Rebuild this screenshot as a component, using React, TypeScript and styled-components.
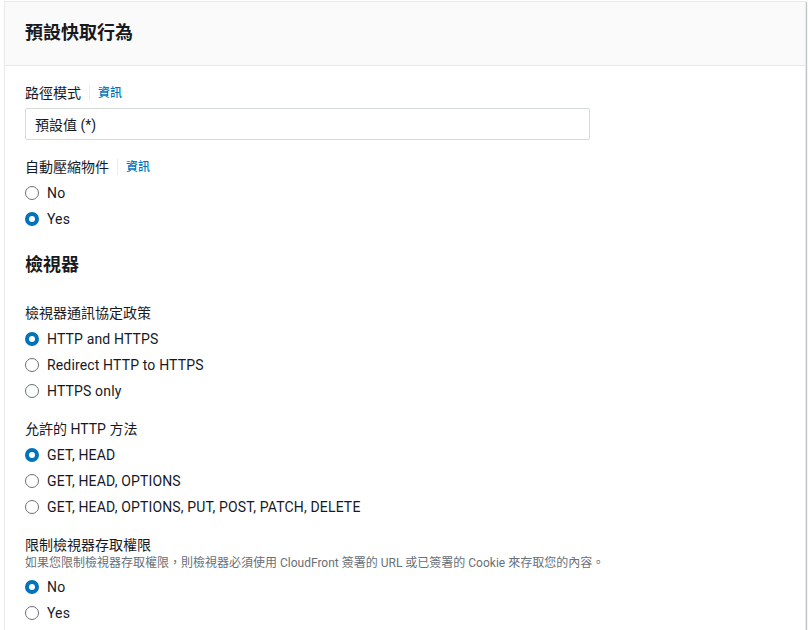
import styled, { createGlobalStyle } from "styled-components";

const GlobalStyle = createGlobalStyle`
  html, body {
    margin: 0;
    padding: 0;
    background: #ffffff;
    font-family: Roboto, "Noto Sans CJK TC", sans-serif;
    color: #16191f;
  }
  * { box-sizing: border-box; }
`;

type Option = { label: string; checked?: boolean };

const Page = styled.div`
  padding: 1px 2px 0 4px;
  height: 630px;
  overflow: hidden;
`;

const Card = styled.section`
  background: #ffffff;
  border: 1px solid #e6eaea;
  border-bottom: none;
  box-shadow: 1px 1px 1px 0 rgba(0, 28, 36, 0.25);
  min-height: 700px;
`;

const CardHeader = styled.header`
  background: #fafafa;
  border-bottom: 1px solid #e6eaea;
  padding: 19px 20px 20px;
`;

const Title = styled.h2`
  margin: 0;
  font-size: 18px;
  line-height: 24px;
  font-weight: 700;
  color: #16191f;
`;

const CardBody = styled.div`
  padding: 17px 20px 0;
  display: flex;
  flex-direction: column;
`;

const Field = styled.div<{ $gap?: number }>`
  display: flex;
  flex-direction: column;
  margin-top: ${(p) => p.$gap ?? 0}px;
`;

const LabelRow = styled.div`
  display: flex;
  align-items: center;
  height: 20px;
`;

const Label = styled.span`
  font-size: 14px;
  line-height: 20px;
  color: #16191f;
`;

const InfoLink = styled.a`
  margin-left: 8px;
  padding-left: 8px;
  border-left: 1px solid #eaeded;
  font-size: 12px;
  line-height: 16px;
  font-weight: 500;
  color: #0073bb;
  text-decoration: none;
`;

const Description = styled.div`
  font-size: 12px;
  line-height: 16px;
  color: #687078;
`;

const Input = styled.div`
  margin-top: 5px;
  width: 565px;
  height: 32px;
  border: 1px solid #d5dbdb;
  border-radius: 2px;
  padding: 0 9px;
  display: flex;
  align-items: center;
  font-size: 14px;
  color: #16191f;
`;

const RadioGroup = styled.div`
  display: flex;
  flex-direction: column;
  margin-top: 3px;
`;

const RadioRow = styled.label`
  display: flex;
  align-items: center;
  height: 26px;
  gap: 8px;
  font-size: 14px;
  letter-spacing: 0.15px;
  color: #16191f;
`;

const RadioDot = styled.span<{ $checked?: boolean }>`
  width: 14px;
  height: 14px;
  border-radius: 50%;
  background: #ffffff;
  border: ${(p) => (p.$checked ? "4px solid #0073bb" : "1.5px solid #687078")};
  flex-shrink: 0;
`;

const SubHeading = styled.h3`
  margin: 21px 0 0;
  font-size: 18px;
  line-height: 24px;
  font-weight: 700;
  color: #16191f;
`;

const FieldLabel = ({ text, info }: { text: string; info?: boolean }) => (
  <LabelRow>
    <Label>{text}</Label>
    {info && <InfoLink href="#">資訊</InfoLink>}
  </LabelRow>
);

const Radios = ({ options }: { options: Option[] }) => (
  <RadioGroup>
    {options.map((o) => (
      <RadioRow key={o.label}>
        <RadioDot $checked={o.checked} />
        {o.label}
      </RadioRow>
    ))}
  </RadioGroup>
);

export default function App() {
  return (
    <Page>
      <GlobalStyle />
      <Card>
        <CardHeader>
          <Title>預設快取行為</Title>
        </CardHeader>
        <CardBody>
          <Field>
            <FieldLabel text="路徑模式" info />
            <Input>預設值 (*)</Input>
          </Field>

          <Field $gap={17}>
            <FieldLabel text="自動壓縮物件" info />
            <Radios options={[{ label: "No" }, { label: "Yes", checked: true }]} />
          </Field>

          <SubHeading>檢視器</SubHeading>

          <Field $gap={26}>
            <FieldLabel text="檢視器通訊協定政策" />
            <Radios
              options={[
                { label: "HTTP and HTTPS", checked: true },
                { label: "Redirect HTTP to HTTPS" },
                { label: "HTTPS only" },
              ]}
            />
          </Field>

          <Field $gap={15}>
            <FieldLabel text="允許的 HTTP 方法" />
            <Radios
              options={[
                { label: "GET, HEAD", checked: true },
                { label: "GET, HEAD, OPTIONS" },
                { label: "GET, HEAD, OPTIONS, PUT, POST, PATCH, DELETE" },
              ]}
            />
          </Field>

          <Field $gap={15}>
            <FieldLabel text="限制檢視器存取權限" />
            <Description>
              如果您限制檢視器存取權限，則檢視器必須使用 CloudFront 簽署的 URL 或已簽署的 Cookie 來存取您的內容。
            </Description>
            <Radios options={[{ label: "No", checked: true }, { label: "Yes" }]} />
          </Field>
        </CardBody>
      </Card>
    </Page>
  );
}
